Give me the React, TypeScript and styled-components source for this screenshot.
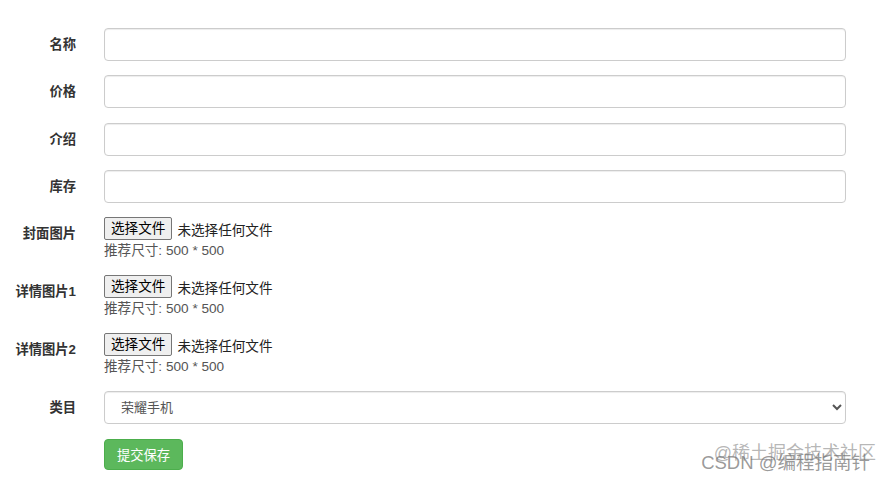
import React, { FunctionComponent } from "react";
import styled, { createGlobalStyle } from "styled-components";

const GlobalStyle = createGlobalStyle`
  html, body {
    margin: 0;
    padding: 0;
    background: #fff;
  }
  body {
    font-family: "Liberation Sans", "Noto Sans CJK SC", sans-serif;
    font-size: 13px;
    color: #333;
  }
`;

const Page = styled.div`
  position: relative;
  width: 890px;
  height: 483px;
  overflow: hidden;
`;

const Form = styled.form`
  padding: 28px 44px 0 0;
`;

const Group = styled.div`
  display: grid;
  grid-template-columns: 76px 742px;
  column-gap: 28px;
  margin-bottom: 14.33px;
`;

const Label = styled.label`
  padding-top: 7px;
  line-height: 20px;
  font-size: 13.3px;
  font-weight: bold;
  text-align: right;
  color: #333;
`;

const TextInput = styled.input`
  box-sizing: border-box;
  width: 100%;
  height: 33px;
  padding: 6px 12px;
  border: 1px solid #ccc;
  border-radius: 4px;
  box-shadow: inset 0 1px 1px rgba(0, 0, 0, 0.075);
  font: inherit;
  color: #555;
  background: #fff;
  outline: none;
`;

const FileLine = styled.div`
  display: flex;
  align-items: center;
  gap: 5px;
  height: 23px;
`;

const FileButton = styled.span`
  box-sizing: border-box;
  height: 23px;
  padding: 1px 6px;
  line-height: 19px;
  font-size: 13.6px;
  color: #000;
  background: #efefef;
  border: 1px solid #767676;
  border-radius: 2px;
  cursor: default;
`;

const FileStatus = styled.span`
  font-size: 13.6px;
  color: #222;
`;

const HiddenFile = styled.input`
  display: none;
`;

const Help = styled.div`
  margin-top: 0.67px;
  line-height: 20px;
  font-size: 13.6px;
  color: #555;
`;

const Select = styled.select`
  box-sizing: border-box;
  width: 100%;
  height: 33px;
  padding: 6px 12px;
  border: 1px solid #ccc;
  border-radius: 4px;
  box-shadow: inset 0 1px 1px rgba(0, 0, 0, 0.075);
  font: inherit;
  color: #555;
  background: #fff;
  outline: none;
`;

const SubmitButton = styled.button`
  box-sizing: border-box;
  height: 31px;
  width: 79px;
  padding: 0;
  white-space: nowrap;
  font: inherit;
  font-size: 13.3px;
  color: #fff;
  background: #5cb85c;
  border: 1px solid #4cae4c;
  border-radius: 4px;
`;

const Watermark = styled.div`
  position: absolute;
  right: 14px;
  bottom: 10px;
  font-family: "Liberation Sans", "Noto Sans CJK SC", sans-serif;
  line-height: 20px;
  text-align: right;
  pointer-events: none;
`;

const MarkTop = styled.div`
  font-size: 18px;
  color: rgba(120, 120, 120, 0.55);
  margin-bottom: -10px;
`;

const MarkBottom = styled.div`
  font-size: 18.5px;
  padding-right: 6px;
  color: rgba(110, 110, 110, 0.7);
`;

const FileField: FunctionComponent<{ label: string; id: string }> = ({ label, id }) => (
  <Group>
    <Label htmlFor={id}>{label}</Label>
    <div>
      <FileLine as="label" htmlFor={id}>
        <FileButton>选择文件</FileButton>
        <FileStatus>未选择任何文件</FileStatus>
      </FileLine>
      <HiddenFile type="file" id={id} />
      <Help>推荐尺寸: 500 * 500</Help>
    </div>
  </Group>
);

const TextField: FunctionComponent<{ label: string; id: string }> = ({ label, id }) => (
  <Group>
    <Label htmlFor={id}>{label}</Label>
    <TextInput type="text" id={id} />
  </Group>
);

export default function App() {
  return (
    <Page>
      <GlobalStyle />
      <Form onSubmit={e => e.preventDefault()}>
        <TextField label="名称" id="name" />
        <TextField label="价格" id="price" />
        <TextField label="介绍" id="intro" />
        <TextField label="库存" id="stock" />
        <FileField label="封面图片" id="cover" />
        <FileField label="详情图片1" id="detail1" />
        <FileField label="详情图片2" id="detail2" />
        <Group>
          <Label htmlFor="category">类目</Label>
          <Select id="category" defaultValue="honor">
            <option value="honor">荣耀手机</option>
          </Select>
        </Group>
        <Group>
          <span />
          <div>
            <SubmitButton type="submit">提交保存</SubmitButton>
          </div>
        </Group>
      </Form>
      <Watermark>
        <MarkTop>@稀土掘金技术社区</MarkTop>
        <MarkBottom>CSDN @编程指南针</MarkBottom>
      </Watermark>
    </Page>
  );
}
